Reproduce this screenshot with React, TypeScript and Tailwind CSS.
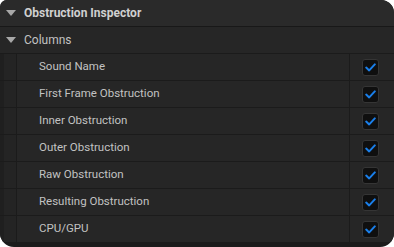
import React from "react";

const rows = [
  "Sound Name",
  "First Frame Obstruction",
  "Inner Obstruction",
  "Outer Obstruction",
  "Raw Obstruction",
  "Resulting Obstruction",
  "CPU/GPU",
];

function Caret() {
  return (
    <svg width="10" height="6" viewBox="0 0 10 6" className="shrink-0">
      <path d="M0 0 H10 L5 6 Z" fill="#a8a8a8" />
    </svg>
  );
}

function Checkbox() {
  return (
    <div className="w-[17px] h-[17px] rounded-[3px] bg-[#0f0f0f] border border-[#353535] flex items-center justify-center">
      <svg width="11" height="9" viewBox="0 0 11 9">
        <path
          d="M1.2 4.6 L4.2 7.4 L9.8 1.4"
          fill="none"
          stroke="#1a7fea"
          strokeWidth="2"
          strokeLinecap="round"
          strokeLinejoin="round"
        />
      </svg>
    </div>
  );
}

export default function App() {
  return (
    <div className="w-[394px] h-[247px] bg-white">
      <div
        className="w-full h-full bg-[#1b1b1b] rounded-tl-[7px] rounded-tr-[13px] rounded-b-[14px] overflow-hidden flex flex-col text-[#c2c2c2]"
        style={{ fontFamily: "Roboto, 'Liberation Sans', sans-serif" }}
      >
        <div className="h-[26px] bg-[#2a2a2a] flex items-center gap-[8px] pl-[6px] shrink-0">
          <Caret />
          <span className="text-[12px] font-bold text-[#d0d0d0]">Obstruction Inspector</span>
        </div>
        <div className="h-[1px] bg-[#181818] shrink-0" />
        <div className="h-[26px] bg-[#262626] flex items-center gap-[8px] pl-[6px] shrink-0">
          <Caret />
          <span className="text-[12px]">Columns</span>
        </div>
        <div className="flex flex-col">
          {rows.map((r) => (
            <div key={r} className="h-[27px] flex border-t border-[#1b1b1b] shrink-0">
              <div className="w-[4px] bg-[#1f1f1f]" />
              <div className="w-[12px] bg-[#242424]" />
              <div className="w-[1px] bg-[#1b1b1b]" />
              <div className="flex-1 bg-[#262626] flex items-center pl-[22px] text-[11.5px]">
                {r}
              </div>
              <div className="w-[1px] bg-[#1b1b1b]" />
              <div className="w-[44px] bg-[#262626] flex items-center pl-[12px]">
                <Checkbox />
              </div>
            </div>
          ))}
        </div>
      </div>
    </div>
  );
}
